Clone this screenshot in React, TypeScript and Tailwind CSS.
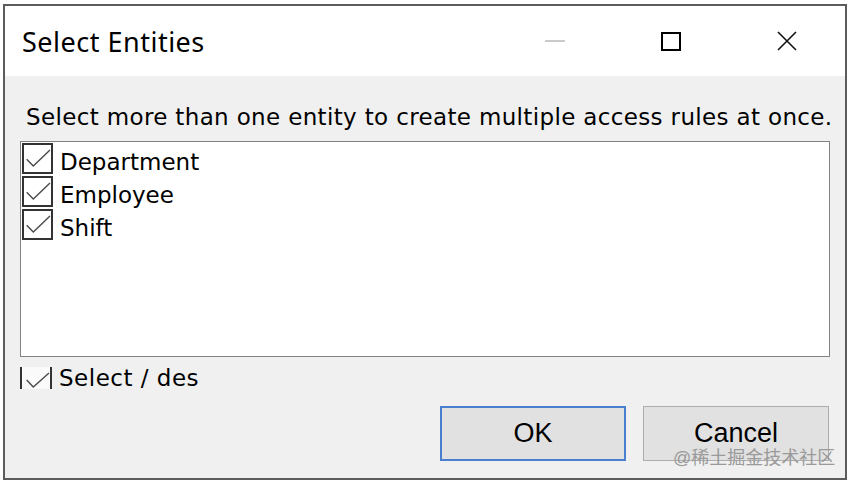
import React from "react";

const ITEMS = ["Department", "Employee", "Shift"];

const BODY_FONT = { fontFamily: '"DejaVu Sans", Verdana, sans-serif' };

function CheckBox() {
  return (
    <div className="w-[31px] h-[31px] border-2 border-[#333333] bg-white shrink-0">
      <svg width="27" height="27" viewBox="0 0 27 27">
        <path d="M2.7 14.3 L9.3 21 L26 5" fill="none" stroke="#4a4a4a" strokeWidth="1.4" />
      </svg>
    </div>
  );
}

export default function App() {
  return (
    <div className="w-[850px] h-[484px] bg-white pt-[4px] pl-[3px]">
      <div className="relative w-[844px] h-[476px] border-2 border-[#5c5c5c] flex flex-col bg-[#f0f0f0]">
        {/* title bar */}
        <header className="h-[70px] bg-white flex items-center shrink-0">
          <h1
            className="flex-1 pl-[17px] text-[27px] tracking-[0.5px] text-black leading-none"
            style={{ fontFamily: '"Noto Sans", "Open Sans", sans-serif' }}
          >
            Select Entities
          </h1>
          <div className="w-[116px] h-full flex items-center justify-center">
            <div className="w-[20px] h-[2px] bg-[#cacaca]" />
          </div>
          <div className="w-[116px] h-full flex items-center justify-center">
            <div className="w-[20px] h-[19px] border-2 border-black" />
          </div>
          <div className="w-[116px] h-full flex items-center justify-center">
            <svg width="20" height="20" viewBox="0 0 20 20">
              <path d="M1 1 L19 19 M19 1 L1 19" stroke="#111" strokeWidth="1.6" fill="none" />
            </svg>
          </div>
        </header>

        {/* body */}
        <div className="flex-1 flex flex-col pt-[27px]" style={BODY_FONT}>
          <p className="pl-[21px] h-[28px] text-[23px] tracking-[0.35px] leading-[28px] text-black whitespace-nowrap">
            Select more than one entity to create multiple access rules at once.
          </p>

          <div className="mt-[10px] mx-[15px] h-[216px] border border-[#828282] bg-white pt-[1px] pl-[1px] flex flex-col gap-[2px]">
            {ITEMS.map((item) => (
              <div key={item} className="h-[31px] flex items-start">
                <CheckBox />
                <span className="ml-[7px] text-[23px] leading-[28px] pt-[5px] text-black whitespace-nowrap">
                  {item}
                </span>
              </div>
            ))}
          </div>

          <div className="mt-[10px] ml-[15px] h-[22px] flex items-center">
            <div className="w-[32px] h-[22px] border-l-2 border-r-2 border-[#333333] bg-[#fafafa]">
              <svg width="28" height="22" viewBox="0 0 28 22">
                <path d="M4.7 13 L11.3 20 L27 6" fill="none" stroke="#4a4a4a" strokeWidth="1.4" />
              </svg>
            </div>
            <span className="ml-[7px] text-[23px] tracking-[0.5px] leading-[22px] text-black whitespace-nowrap">
              Select / des
            </span>
          </div>

          <div
            className="mt-[17px] flex justify-end gap-[17px] pr-[16px]"
            style={{ fontFamily: '"Liberation Sans", Arial, sans-serif' }}
          >
            <button className="w-[186px] h-[55px] bg-[#e1e1e1] border-2 border-[#4a7fd0] text-[27px] text-black leading-none">
              OK
            </button>
            <button className="w-[186px] h-[55px] bg-[#e1e1e1] border border-[#adadad] text-[27px] text-black leading-none">
              Cancel
            </button>
          </div>
        </div>

        <span
          className="absolute left-[668px] top-[441px] text-[18px] leading-[22px] text-[#9a9a9a] whitespace-nowrap"
          style={{ fontFamily: '"Liberation Sans", "Noto Sans CJK SC", sans-serif' }}
        >
          @稀土掘金技术社区
        </span>
      </div>
    </div>
  );
}
